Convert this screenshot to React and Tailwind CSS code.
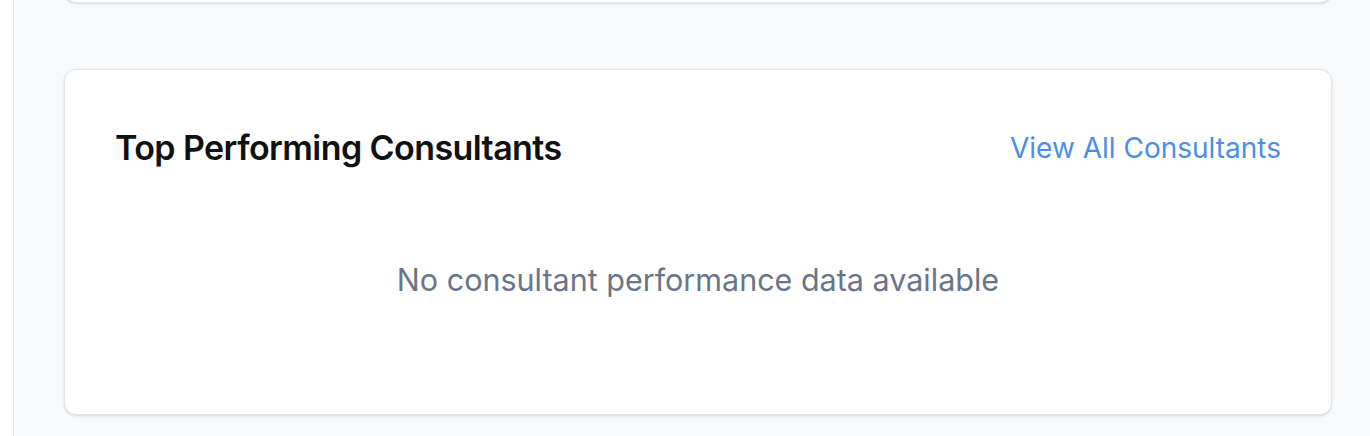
export default function App() {
  return (
    <div className="flex w-[1370px] h-[436px] overflow-hidden bg-white" style={{ fontFamily: 'Inter, "Noto Sans", sans-serif' }}>
      <div className="w-[14px] shrink-0 bg-white border-r border-[#e3e7ee]" />
      <main className="flex-1 bg-[#f8f9fb] pl-[50px] pr-[38px] flex flex-col">
        <div className="mt-[-40px] h-[43px] shrink-0 rounded-xl border border-[#e4e4e7] bg-white shadow-sm" />
        <section className="mt-[66px] h-[346px] shrink-0 rounded-xl border border-[#e4e4e7] bg-white shadow-sm px-[50px] pt-[58px]">
          <div className="flex h-[40px] items-center justify-between">
            <h2 className="text-[34px] leading-[40px] font-semibold tracking-[-0.017em] text-[#111111]">Top Performing Consultants</h2>
            <a className="text-[28px] leading-[40px] text-[#4a8fe2]">View All Consultants</a>
          </div>
          <p className="mt-[92px] text-center text-[30.5px] leading-[40px] text-[#6b7588]">No consultant performance data available</p>
        </section>
      </main>
    </div>
  );
}
